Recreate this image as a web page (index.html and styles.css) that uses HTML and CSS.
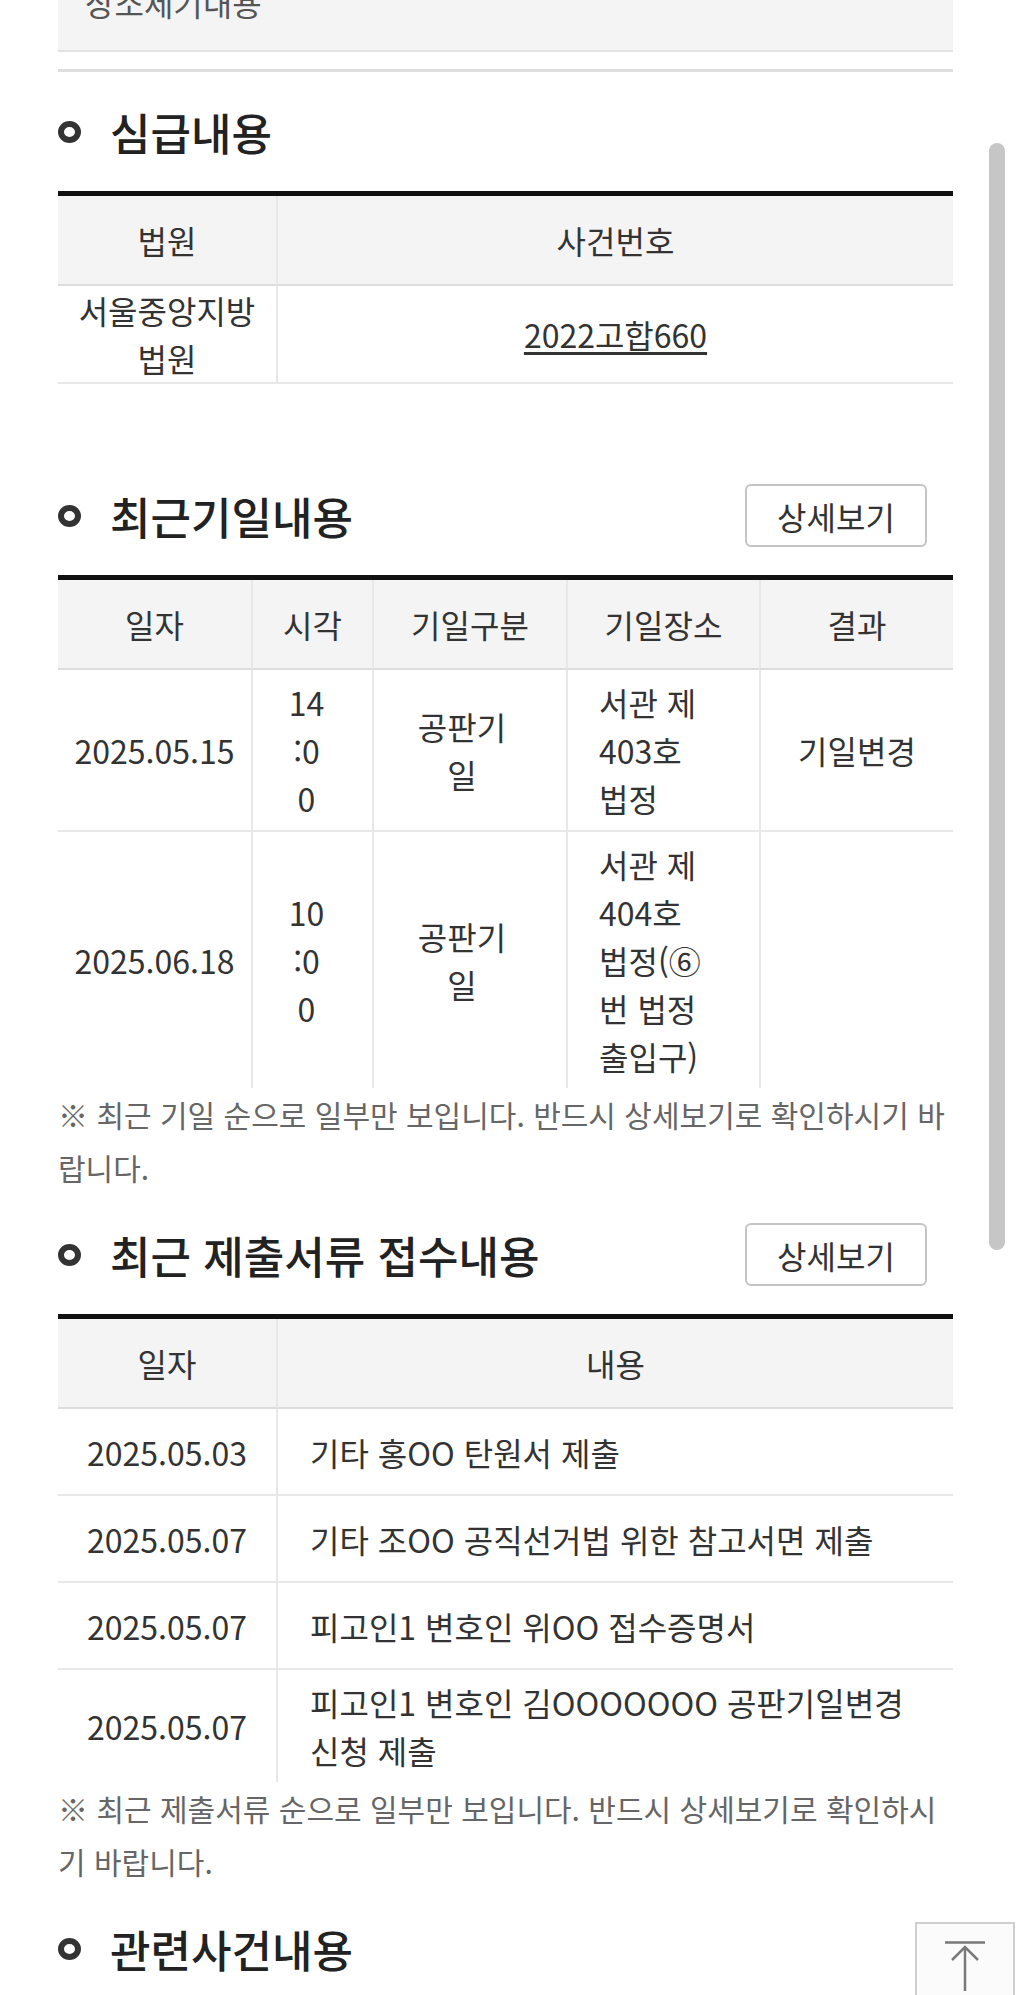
FILE: index.html
```html
<!DOCTYPE html>
<html lang="ko">
<head>
<meta charset="utf-8">
<title>사건일반내용</title>
<link rel="stylesheet" href="styles.css">
</head>
<body>
<div class="page">
  <div class="prev-box"><p class="prev-text">상소제기내용</p></div>
  <div class="divider"></div>

  <section class="sec sec-first">
    <div class="sec-head">
      <h2 class="sec-title"><span class="bullet"></span>심급내용</h2>
    </div>
    <table class="tbl tbl-inst">
      <colgroup><col class="c-court"><col class="c-case"></colgroup>
      <thead><tr><th>법원</th><th>사건번호</th></tr></thead>
      <tbody><tr><td>서울중앙지방법원</td><td><a class="case-link" href="#">2022고합660</a></td></tr></tbody>
    </table>
  </section>

  <section class="sec sec-dates">
    <div class="sec-head">
      <h2 class="sec-title"><span class="bullet"></span>최근기일내용</h2>
      <button class="btn-more" type="button">상세보기</button>
    </div>
    <table class="tbl tbl-open tbl-dates">
      <colgroup><col class="c-date"><col class="c-time"><col class="c-kind"><col class="c-place"><col class="c-result"></colgroup>
      <thead><tr><th>일자</th><th>시각</th><th>기일구분</th><th>기일장소</th><th>결과</th></tr></thead>
      <tbody>
        <tr><td>2025.05.15</td><td class="time">14:00</td><td class="kind">공판기일</td><td class="place">서관 제403호 법정</td><td>기일변경</td></tr>
        <tr><td>2025.06.18</td><td class="time">10:00</td><td class="kind">공판기일</td><td class="place">서관 제404호 법정(⑥번 법정 출입구)</td><td></td></tr>
      </tbody>
    </table>
    <p class="note">※ 최근 기일 순으로 일부만 보입니다. 반드시 상세보기로 확인하시기 바랍니다.</p>
  </section>

  <section class="sec">
    <div class="sec-head">
      <h2 class="sec-title"><span class="bullet"></span>최근 제출서류 접수내용</h2>
      <button class="btn-more" type="button">상세보기</button>
    </div>
    <table class="tbl tbl-open tbl-docs">
      <colgroup><col class="c-court"><col class="c-case"></colgroup>
      <thead><tr><th>일자</th><th>내용</th></tr></thead>
      <tbody>
        <tr><td>2025.05.03</td><td class="txt">기타 홍OO 탄원서 제출</td></tr>
        <tr><td>2025.05.07</td><td class="txt">기타 조OO 공직선거법 위한 참고서면 제출</td></tr>
        <tr><td>2025.05.07</td><td class="txt">피고인1 변호인 위OO 접수증명서</td></tr>
        <tr><td>2025.05.07</td><td class="txt">피고인1 변호인 김OOOOOOO 공판기일변경 신청 제출</td></tr>
      </tbody>
    </table>
    <p class="note">※ 최근 제출서류 순으로 일부만 보입니다. 반드시 상세보기로 확인하시기 바랍니다.</p>
  </section>

  <section class="sec">
    <div class="sec-head">
      <h2 class="sec-title"><span class="bullet"></span>관련사건내용</h2>
    </div>
  </section>
</div>

<div class="scroll-thumb"></div>
<a class="to-top" href="#">
  <svg width="44" height="52" viewBox="0 0 44 52" aria-hidden="true">
    <path d="M2 1.5H42M22 6V50M9 19L22 6L35 19" fill="none" stroke="#7a7a7a" stroke-width="2.5"/>
  </svg>
</a>
</body>
</html>
```

FILE: styles.css
```css
body {
  margin: 0;
  background: #fff;
  color: #333;
  font-family: "Noto Sans CJK KR", "Noto Sans KR", sans-serif;
  overflow: hidden;
}

.page {
  width: 895px;
  margin-left: 58px;
}

.prev-box {
  margin-top: -22px;
  padding: 0 27px 24px;
  background: #f4f4f4;
  border-bottom: 2px solid #e3e3e3;
}

.prev-text {
  margin: 0;
  font-size: 32px;
  line-height: 48px;
  color: #555;
}

.divider {
  margin-top: 17px;
  height: 3px;
  background: #dedede;
}

.sec-first {
  margin-top: 28px;
}

.sec-dates {
  margin-top: 100px;
}

.sec-head {
  display: flex;
  align-items: center;
  justify-content: space-between;
  height: 63px;
  margin-bottom: 28px;
}

.sec-title {
  margin: 0;
  display: flex;
  align-items: center;
  font-size: 44px;
  font-weight: 500;
  line-height: 1;
  color: #222;
}

.bullet {
  width: 23px;
  height: 22px;
  box-sizing: border-box;
  border: 6px solid #333;
  border-radius: 50%;
  margin-right: 29px;
}

.btn-more {
  margin-right: 26px;
  width: 182px;
  height: 63px;
  box-sizing: border-box;
  border: 2px solid #c4c4c4;
  border-radius: 6px;
  background: #fff;
  font-family: inherit;
  font-size: 32px;
  color: #333;
  padding: 0;
}

.tbl {
  width: 100%;
  border-collapse: separate;
  border-spacing: 0;
  table-layout: fixed;
  border-top: 5px solid #111;
  font-size: 32px;
  line-height: 48px;
  color: #333;
}

.tbl th {
  background: #f4f4f4;
  font-weight: 400;
  padding: 20px 10px;
  border-bottom: 2px solid #dcdcdc;
}

.tbl th + th,
.tbl td + td {
  border-left: 2px solid #e8e8e8;
}

.tbl td {
  text-align: center;
  padding: 8px 10px;
  border-bottom: 2px solid #e8e8e8;
  overflow-wrap: break-word;
  vertical-align: middle;
}

.tbl-inst td {
  padding-top: 0;
  padding-bottom: 0;
}

.tbl-open tbody tr:last-child td {
  border-bottom: 0;
}

.c-court { width: 218px; }
.c-case { width: 677px; }

.c-date { width: 193px; }
.c-time { width: 121px; }
.c-kind { width: 194px; }
.c-place { width: 193px; }
.c-result { width: 194px; }

.tbl td.time {
  padding-left: 34px;
  padding-right: 46px;
}

.tbl td.kind {
  padding-left: 32px;
  padding-right: 48px;
}

.tbl td.place {
  text-align: left;
  padding-left: 31px;
  padding-right: 40px;
}

.tbl-docs td {
  height: 87px;
  box-sizing: border-box;
}

.tbl td.txt {
  text-align: left;
  padding-left: 32px;
  padding-right: 32px;
}

.case-link {
  color: #333;
  text-decoration: underline;
  text-underline-offset: 4px;
}

.note {
  margin: 0 0 29px;
  font-size: 30px;
  line-height: 53px;
  color: #666;
}

.scroll-thumb {
  position: fixed;
  top: 143px;
  left: 989px;
  width: 16px;
  height: 1107px;
  border-radius: 8px;
  background: #c6c6c6;
}

.to-top {
  position: fixed;
  left: 915px;
  top: 1922px;
  width: 100px;
  height: 80px;
  box-sizing: border-box;
  padding-top: 17px;
  display: flex;
  justify-content: center;
  align-items: flex-start;
  background: #fbfbfb;
  border: 2px solid #cfcfcf;
}
```
